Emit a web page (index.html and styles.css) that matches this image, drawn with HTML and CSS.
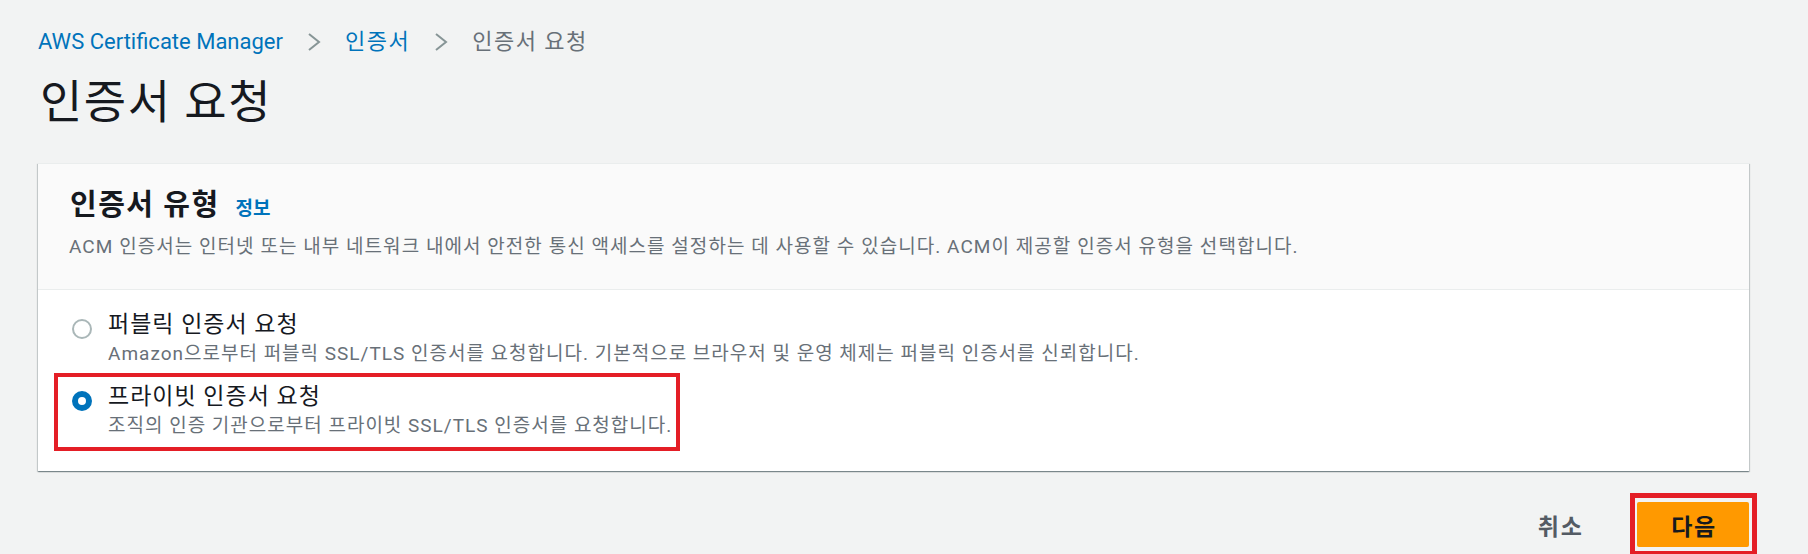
FILE: index.html
```html
<!DOCTYPE html>
<html lang="ko">
<head>
<meta charset="utf-8">
<title>인증서 요청</title>
<link rel="stylesheet" href="styles.css">
</head>
<body>
<div class="page">
  <nav class="breadcrumb">
    <a class="crumb-link">AWS Certificate Manager</a>
    <svg class="chev" width="14" height="20" viewBox="0 0 14 20"><polyline points="2,2 12,10 2,18" fill="none" stroke="#879596" stroke-width="2"/></svg>
    <a class="crumb-link crumb-ko">인증서</a>
    <svg class="chev" width="14" height="20" viewBox="0 0 14 20"><polyline points="2,2 12,10 2,18" fill="none" stroke="#879596" stroke-width="2"/></svg>
    <span class="crumb-current crumb-ko">인증서 요청</span>
  </nav>
  <h1 class="title">인증서 요청</h1>
  <section class="card">
    <header class="card-header">
      <div class="heading-row">
        <h2 class="heading">인증서 유형</h2>
        <a class="info">정보</a>
      </div>
      <p class="card-desc">ACM 인증서는 인터넷 또는 내부 네트워크 내에서 안전한 통신 액세스를 설정하는 데 사용할 수 있습니다. ACM이 제공할 인증서 유형을 선택합니다.</p>
    </header>
    <div class="card-body">
      <div class="option">
        <span class="radio"></span>
        <span class="option-text">
          <span class="option-label">퍼블릭 인증서 요청</span>
          <span class="option-desc">Amazon으로부터 퍼블릭 SSL/TLS 인증서를 요청합니다. 기본적으로 브라우저 및 운영 체제는 퍼블릭 인증서를 신뢰합니다.</span>
        </span>
      </div>
      <div class="option option-second">
        <span class="radio radio-checked"></span>
        <span class="option-text">
          <span class="option-label">프라이빗 인증서 요청</span>
          <span class="option-desc">조직의 인증 기관으로부터 프라이빗 SSL/TLS 인증서를 요청합니다.</span>
        </span>
        <span class="mark mark-option"></span>
      </div>
    </div>
  </section>
  <div class="actions">
    <button class="btn-cancel">취소</button>
    <div class="btn-wrap">
      <button class="btn-primary">다음</button>
      <span class="mark mark-btn"></span>
    </div>
  </div>
</div>
</body>
</html>
```

FILE: styles.css
```css
html, body {
  margin: 0;
  height: 554px;
  overflow: hidden;
  background: #f2f3f3;
}
body {
  font-family: Roboto, "Noto Sans CJK KR", sans-serif;
  color: #16191f;
}
.page {
  padding: 28px 59px 0 38px;
}
.breadcrumb {
  display: flex;
  align-items: center;
  gap: 24px;
  height: 28px;
  font-size: 22px;
  line-height: 28px;
}
.crumb-link {
  color: #0073bb;
}
.crumb-ko {
  letter-spacing: 1.5px;
}
.crumb-current {
  color: #687078;
}
.chev {
  display: block;
}
.title {
  margin: 19px 0 0 2px;
  font-size: 46px;
  font-weight: 400;
  letter-spacing: 1.5px;
  line-height: 54px;
  color: #16191f;
}
.card {
  margin-top: 34px;
  background: #fff;
  box-shadow: 0 1px 1px 0 rgba(0, 28, 36, 0.3), 1px 1px 1px 0 rgba(0, 28, 36, 0.15), -1px 1px 1px 0 rgba(0, 28, 36, 0.15);
  border-top: 1px solid #eaeded;
}
.card-header {
  background: #fafafa;
  padding: 24px 31px 29px;
  border-bottom: 1px solid #eaeded;
}
.heading-row {
  display: flex;
  align-items: baseline;
  gap: 16px;
  padding-left: 1px;
}
.heading {
  margin: 0;
  font-size: 29px;
  font-weight: 700;
  letter-spacing: 1.5px;
  line-height: 34px;
}
.info {
  font-size: 19px;
  font-weight: 700;
  color: #0073bb;
}
.card-desc {
  margin: 12px 0 0;
  font-size: 19px;
  letter-spacing: 1.05px;
  line-height: 26px;
  color: #687078;
}
.card-body {
  padding: 21px 31px 32px;
}
.option {
  position: relative;
  display: grid;
  grid-template-columns: 20px 1fr;
  column-gap: 16px;
  padding-left: 3px;
}
.option-second {
  margin-top: 16px;
}
.radio {
  box-sizing: border-box;
  width: 20px;
  height: 20px;
  margin-top: 8px;
  border-radius: 50%;
  border: 2px solid #aab7b8;
  background: #fff;
}
.radio-checked {
  border: 6px solid #0073bb;
}
.option-text {
  display: flex;
  flex-direction: column;
  gap: 2px;
}
.option-label {
  font-size: 23px;
  letter-spacing: 1px;
  line-height: 28px;
  color: #16191f;
}
.option-desc {
  font-size: 19px;
  letter-spacing: 1px;
  line-height: 26px;
  color: #687078;
}
.mark {
  position: absolute;
  box-sizing: border-box;
  border: 4px solid #e41e26;
  pointer-events: none;
}
.mark-option {
  left: -15px;
  top: -10px;
  width: 626px;
  height: 78px;
}
.actions {
  display: flex;
  justify-content: flex-end;
  align-items: center;
  margin-top: 31px;
}
.btn-cancel {
  background: none;
  border: none;
  padding: 0 20px;
  margin-right: 33px;
  font-family: inherit;
  font-size: 23px;
  font-weight: 700;
  letter-spacing: 2px;
  color: #545b64;
}
.btn-wrap {
  position: relative;
}
.btn-primary {
  display: block;
  width: 112px;
  height: 45px;
  background: #ff9900;
  border: none;
  border-radius: 2px;
  padding: 0 0 0 2px;
  font-family: inherit;
  font-size: 23px;
  font-weight: 700;
  letter-spacing: 1.5px;
  color: #16191f;
}
.mark-btn {
  left: -7px;
  right: -8px;
  top: -9px;
  bottom: -9px;
  border-width: 5px;
}
```
